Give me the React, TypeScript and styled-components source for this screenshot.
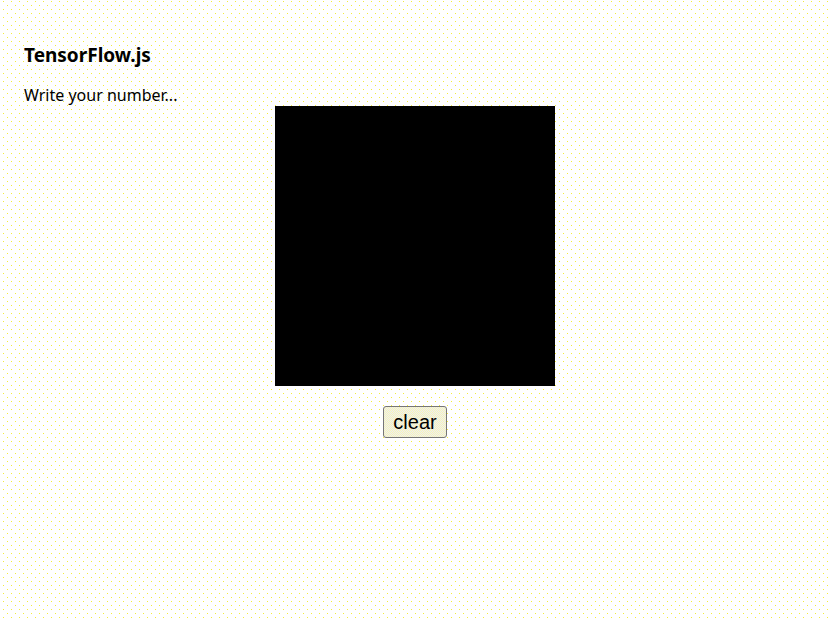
import React from "react";
import styled, { createGlobalStyle } from "styled-components";

const GlobalStyle = createGlobalStyle`
  html, body {
    margin: 0;
    padding: 0;
    background-color: #ffffff;
    background-image:
      conic-gradient(at 1px 1px, transparent 75%, #f4ec3c 0),
      conic-gradient(at 1px 1px, transparent 75%, #f4ec3c 0);
    background-size: 8px 8px;
    background-position: 3px 1px, 7px 5px;
    min-height: 100%;
  }
  body {
    width: 830px;
    height: 618px;
    overflow: hidden;
  }
`;

const Page = styled.main`
  padding: 0 24px;
  font-family: "Noto Sans", "Open Sans", sans-serif;
  color: #000;
`;

const Title = styled.h3`
  margin: 42px 0 16px;
  font-size: 19px;
  line-height: 26px;
  font-weight: 700;
`;

const Prompt = styled.p`
  margin: 0;
  font-size: 16px;
  line-height: 22px;
`;

const Stage = styled.section`
  display: flex;
  flex-direction: column;
  align-items: center;
  margin: 0 -24px;
  gap: 20px;
`;

const Canvas = styled.canvas`
  display: block;
  width: 280px;
  height: 280px;
  background: #000;
`;

const ClearButton = styled.button`
  width: 64px;
  height: 32px;
  padding: 0;
  font-family: "Liberation Sans", Arial, sans-serif;
  font-size: 20px;
  color: #000;
  border: 1px solid #767676;
  border-radius: 3px;
  background-color: #f4f4d8;
  background-image: conic-gradient(#f9f7b4 25%, #ebebf6 0 50%, #f9f7b4 0 75%, #ebebf6 0);
  background-size: 2px 2px;
`;

export default function App() {
  return (
    <>
      <GlobalStyle />
      <Page>
        <Title>TensorFlow.js</Title>
        <Prompt>Write your number...</Prompt>
        <Stage>
          <Canvas width={280} height={280} />
          <ClearButton type="button">clear</ClearButton>
        </Stage>
      </Page>
    </>
  );
}
